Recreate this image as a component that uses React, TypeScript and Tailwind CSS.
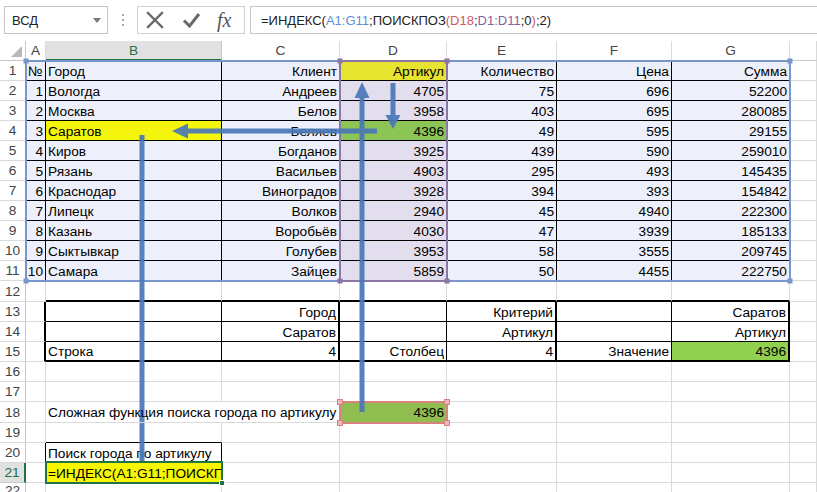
import React from "react";

type Cell = { t?: string; right?: boolean; bg?: string };

const tableRows: string[][] = [
  ["№", "Город", "Клиент", "Артикул", "Количество", "Цена", "Сумма"],
  ["1", "Вологда", "Андреев", "4705", "75", "696", "52200"],
  ["2", "Москва", "Белов", "3958", "403", "695", "280085"],
  ["3", "Саратов", "Беляев", "4396", "49", "595", "29155"],
  ["4", "Киров", "Богданов", "3925", "439", "590", "259010"],
  ["5", "Рязань", "Васильев", "4903", "295", "493", "145435"],
  ["6", "Краснодар", "Виноградов", "3928", "394", "393", "154842"],
  ["7", "Липецк", "Волков", "2940", "45", "4940", "222300"],
  ["8", "Казань", "Воробьёв", "4030", "47", "3939", "185133"],
  ["9", "Сыктывкар", "Голубев", "3953", "58", "3555", "209745"],
  ["10", "Самара", "Зайцев", "5859", "50", "4455", "222750"],
];

function getCell(r: number, c: number): Cell {
  if (r >= 1 && r <= 11 && c <= 6) {
    const t = tableRows[r - 1][c];
    let right = true;
    if (c === 1) right = false;
    if (r === 1 && c === 0) right = false;
    let bg = "bg-[#edf0fa]";
    if (c === 3) bg = "bg-[#e2deee]";
    if (r === 1 && c === 3) bg = "bg-[#e6e42e]";
    if (r === 4 && c === 1) bg = "bg-[#f4f40c]";
    if (r === 4 && c === 3) bg = "bg-[#8cc455]";
    return { t, right, bg };
  }
  const m: Record<string, Cell> = {
    "13-2": { t: "Город", right: true },
    "13-4": { t: "Критерий", right: true },
    "13-6": { t: "Саратов", right: true },
    "14-2": { t: "Саратов", right: true },
    "14-4": { t: "Артикул", right: true },
    "14-6": { t: "Артикул", right: true },
    "15-1": { t: "Строка" },
    "15-2": { t: "4", right: true },
    "15-3": { t: "Столбец", right: true },
    "15-4": { t: "4", right: true },
    "15-5": { t: "Значение", right: true },
    "15-6": { t: "4396", right: true, bg: "bg-[#92d050]" },
    "18-1": { t: "Сложная функция поиска города по артикулу" },
    "18-3": { t: "4396", right: true, bg: "bg-[#8fbd50]" },
    "20-1": { t: "Поиск города по артикулу" },
    "21-1": { t: "=ИНДЕКС(A1:G11;ПОИСКПОЗ(D18;D1:D11;0);2)", bg: "bg-[#f6f600]" },
  };
  return m[`${r}-${c}`] || {};
}

type B = "gray" | "black" | "black2" | "none";

function borderR(b: B) {
  if (b === "black") return "border-r border-r-black";
  if (b === "black2") return "border-r-2 border-r-black";
  if (b === "none") return "border-r border-r-transparent";
  return "border-r border-r-[#dadada]";
}
function borderB(b: B) {
  if (b === "black") return "border-b border-b-black";
  if (b === "black2") return "border-b-2 border-b-black";
  if (b === "none") return "border-b border-b-transparent";
  return "border-b border-b-[#dadada]";
}

function borders(r: number, c: number): string {
  let R: B = "gray";
  let Bb: B = "gray";
  if (r >= 1 && r <= 11 && c <= 6) {
    R = "black";
    Bb = "black";
  }
  if (r === 12 && c >= 1 && c <= 6) Bb = "black2";
  if (r >= 13 && r <= 15) {
    if (c === 0) R = "black2";
    if (c === 1 || c === 3 || c === 5) R = "black";
    if (c === 2 || c === 4 || c === 6) R = "black2";
    if (c >= 1 && c <= 6) Bb = r === 15 ? "black2" : "black";
  }
  if (r === 18 && c === 1) R = "none";
  if (r === 19 && c === 1) Bb = "black";
  if (r === 20 && (c === 0 || c === 1)) R = "black";
  if (r === 21 && c === 1) R = "none";
  return borderR(R) + " " + borderB(Bb);
}

const letters = ["A", "B", "C", "D", "E", "F", "G", ""];

function Grid() {
  const items: React.ReactNode[] = [];
  items.push(
    <div key="corner" className="relative bg-white border-r border-b border-r-[#c8c8c8] border-b-[#c8c8c8]">
      <div className="absolute right-[3px] bottom-[3px] w-0 h-0 border-l-[11px] border-l-transparent border-b-[11px] border-b-[#b9b9b9]" />
    </div>
  );
  letters.forEach((l, i) => {
    if (i === 1) {
      items.push(
        <div
          key={"h" + i}
          className="flex items-center justify-center pt-[1px] bg-[#e1e1e1] text-[#217346] border-r border-r-[#c8c8c8] border-b-2 border-b-[#217346]"
        >
          {l}
        </div>
      );
    } else {
      items.push(
        <div
          key={"h" + i}
          className="flex items-center justify-center pt-[1px] bg-white text-[#444] border-r border-r-[#dadada] border-b border-b-[#c8c8c8]"
        >
          {l}
        </div>
      );
    }
  });
  for (let r = 1; r <= 22; r++) {
    if (r === 21) {
      items.push(
        <div
          key={"rh" + r}
          className="flex items-center justify-center pt-[1px] bg-[#e1e1e1] text-[#217346] border-r-2 border-r-[#217346] border-b border-b-[#c8c8c8]"
        >
          {r}
        </div>
      );
    } else {
      items.push(
        <div
          key={"rh" + r}
          className="flex items-center justify-center pt-[1px] bg-white text-[#444] border-r border-r-[#c8c8c8] border-b border-b-[#dadada]"
        >
          {r}
        </div>
      );
    }
    for (let c = 0; c <= 7; c++) {
      const cell = getCell(r, c);
      const overflow =
        r === 18 && c === 1
          ? "overflow-visible relative z-10"
          : "overflow-hidden";
      items.push(
        <div
          key={r + "-" + c}
          className={
            "flex items-center whitespace-nowrap px-[2px] pt-[2px] text-black " +
            (cell.right ? "justify-end " : "justify-start ") +
            (cell.bg ? cell.bg + " " : "") +
            overflow +
            " " +
            borders(r, c)
          }
        >
          {cell.t}
        </div>
      );
    }
  }
  return (
    <div className="grid grid-cols-[26px_20px_176px_118px_107px_110px_115px_118px_1fr] grid-rows-[20px_repeat(11,20px)_21px_repeat(5,20px)_21px_20px_20px_20px_1fr] h-[451px]">
      {items}
    </div>
  );
}

function FormulaBar() {
  return (
    <div className="h-[41px] flex items-start pt-[6px] bg-white text-[13px]">
      <div className="ml-[4px] w-[104px] h-[28px] border border-[#c6c6c6] flex items-center pl-[7px] relative text-[#222]">
        ВСД
        <svg className="absolute right-[6px] top-[11px]" width="8" height="5" viewBox="0 0 8 5">
          <path d="M0 0 L8 0 L4 5 Z" fill="#7a7a7a" />
        </svg>
      </div>
      <div className="w-[29px] h-[28px] flex flex-col items-center justify-center gap-[3px]">
        <div className="w-[2px] h-[2px] bg-[#a8a8a8]" />
        <div className="w-[2px] h-[2px] bg-[#a8a8a8]" />
        <div className="w-[2px] h-[2px] bg-[#a8a8a8]" />
      </div>
      <div className="w-[108px] h-[28px] border border-[#d0d0d0] flex items-center">
        <svg className="ml-[8px]" width="18" height="18" viewBox="0 0 18 18">
          <path d="M2 2 L16 16 M16 2 L2 16" stroke="#6a6a6a" strokeWidth="2.4" strokeLinecap="square" />
        </svg>
        <svg className="ml-[18px]" width="19" height="18" viewBox="0 0 19 18">
          <path d="M2 9.5 L7.5 15 L17 3" stroke="#6a6a6a" strokeWidth="3" fill="none" />
        </svg>
        <span
          className="ml-[16px] text-[20px] italic text-[#555] leading-none"
          style={{ fontFamily: '"Liberation Serif", "DejaVu Serif", serif' }}
        >
          fx
        </span>
      </div>
      <div className="ml-[5px] flex-1 h-[28px] border border-[#c6c6c6] border-r-0 flex items-center pl-[10px] text-[#222] whitespace-nowrap">
        <span>=ИНДЕКС(</span>
        <span className="text-[#5b8fd6]">A1:G11</span>
        <span>;ПОИСКПОЗ</span>
        <span className="text-[#d05a63]">(D18</span>
        <span>;</span>
        <span className="text-[#8064a2]">D1:D11</span>
        <span>;0</span>
        <span className="text-[#d05a63]">)</span>
        <span>;2)</span>
      </div>
    </div>
  );
}

function Overlay() {
  const blue = "#7896c9";
  const purple = "#8a77a6";
  const red = "#d9817f";
  const arrow = "#4a78b8";
  const sq = (x: number, y: number, color: string, key: string) => (
    <rect key={key} x={x - 2.5} y={y - 2.5} width="5" height="5" fill={color} />
  );
  return (
    <svg className="absolute inset-0 pointer-events-none" width="817" height="492" viewBox="0 0 817 492">
      <rect x="26" y="61" width="764" height="220" fill="none" stroke={blue} strokeWidth="2" />
      {sq(26, 61, blue, "b1")}
      {sq(790, 61, blue, "b2")}
      {sq(26, 281, blue, "b3")}
      {sq(790, 281, blue, "b4")}
      <rect x="340" y="61" width="107" height="220" fill="none" stroke={purple} strokeWidth="2" />
      {sq(340, 61, purple, "p1")}
      {sq(447, 61, purple, "p2")}
      {sq(340, 281, purple, "p3")}
      {sq(447, 281, purple, "p4")}
      <rect x="340" y="402" width="107" height="21" fill="none" stroke={red} strokeWidth="2" />
      <rect x="337.5" y="399.5" width="5" height="5" fill="#f0b8b8" stroke={red} strokeWidth="1" />
      <rect x="444.5" y="399.5" width="5" height="5" fill="#f0b8b8" stroke={red} strokeWidth="1" />
      <rect x="337.5" y="420.5" width="5" height="5" fill="#f0b8b8" stroke={red} strokeWidth="1" />
      <rect x="444.5" y="420.5" width="5" height="5" fill="#f0b8b8" stroke={red} strokeWidth="1" />
      <g opacity="0.92">
        <line x1="362" y1="412" x2="362" y2="96" stroke={arrow} strokeWidth="5" />
        <path d="M362 82 L369.5 98 L354.5 98 Z" fill={arrow} />
        <line x1="393" y1="83" x2="393" y2="117" stroke={arrow} strokeWidth="5" />
        <path d="M393 129 L400.5 115 L385.5 115 Z" fill={arrow} />
        <line x1="377" y1="131" x2="186" y2="131" stroke={arrow} strokeWidth="5" />
        <path d="M172 131 L188 123.5 L188 138.5 Z" fill={arrow} />
        <line x1="142" y1="135" x2="142" y2="463" stroke={arrow} strokeWidth="5" />
      </g>
      <rect x="46" y="462" width="176" height="21" fill="none" stroke="#217346" strokeWidth="2" />
      <rect x="219.5" y="480.5" width="5" height="5" fill="#217346" stroke="#ffffff" strokeWidth="1" />
    </svg>
  );
}

export default function App() {
  return (
    <div
      className="relative w-[817px] h-[492px] overflow-hidden bg-white text-[13.7px] leading-none"
      style={{ fontFamily: '"Liberation Sans", Arial, sans-serif' }}
    >
      <FormulaBar />
      <Grid />
      <Overlay />
    </div>
  );
}
